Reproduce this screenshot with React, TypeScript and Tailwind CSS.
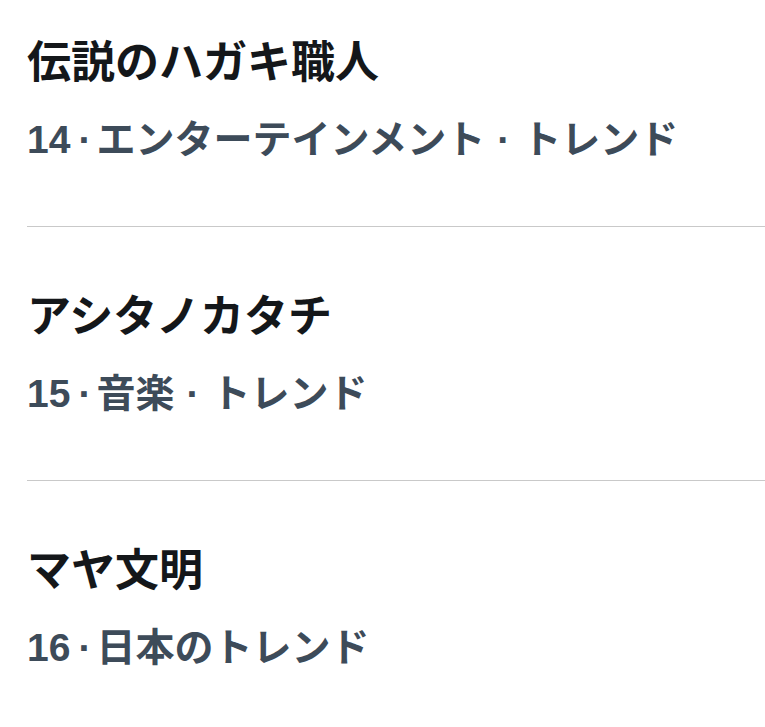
const trends = [
  { title: "伝説のハガキ職人", rank: "14", meta: ["エンターテインメント", "トレンド"] },
  { title: "アシタノカタチ", rank: "15", meta: ["音楽", "トレンド"] },
  { title: "マヤ文明", rank: "16", meta: ["日本のトレンド"] },
];

export default function App() {
  return (
    <div
      className="h-[727px] w-[765px] overflow-hidden bg-white"
      style={{ fontFamily: '"Liberation Sans", "Noto Sans CJK JP", sans-serif' }}
    >
      {trends.map((t, i) => (
        <div
          key={t.rank}
          className={
            i === 0
              ? "ml-[27px] border-b border-[#c9c9c9] pb-[62px] pt-[37px]"
              : "ml-[27px] border-b border-[#c9c9c9] pb-[62px] pt-[64px]"
          }
        >
          <div className="text-[44px] font-bold leading-[52px] text-[#14171a]">{t.title}</div>
          <div className="mt-[27px] flex items-center text-[39px] font-bold leading-[48px] text-[#3d4b59]">
            <span>{t.rank}</span>
            <span className="ml-[8px] mr-[5px]">·</span>
            {t.meta.map((m, j) => (
              <span key={m} className="flex items-center">
                {j > 0 && <span className="ml-[12px] mr-[12px]">·</span>}
                <span>{m}</span>
              </span>
            ))}
          </div>
        </div>
      ))}
    </div>
  );
}
